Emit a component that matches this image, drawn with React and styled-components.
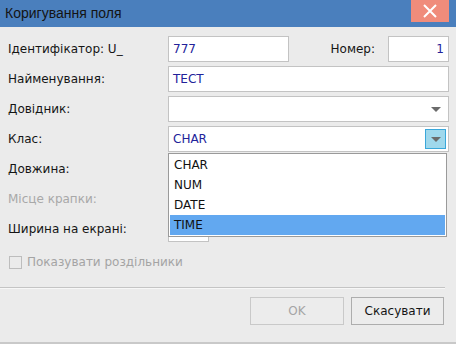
import React from "react";
import styled, { createGlobalStyle } from "styled-components";

const Global = createGlobalStyle`
  html, body {
    margin: 0;
    padding: 0;
    background: #ebebeb;
  }
  body {
    font-family: "DejaVu Sans", Verdana, sans-serif;
  }
`;

const Window = styled.div`
  width: 456px;
  height: 344px;
  box-sizing: border-box;
  display: flex;
  flex-direction: column;
  background: #ebebeb;
  border-bottom: 2px solid #c9c9c9;
  overflow: hidden;
`;

const TitleBar = styled.div`
  height: 27px;
  flex: none;
  display: flex;
  align-items: flex-start;
  justify-content: space-between;
  background: #4a7fbd;
`;

const Title = styled.span`
  font-family: "Liberation Sans", Arial, sans-serif;
  font-size: 14px;
  color: #141414;
  padding: 5px 0 0 5px;
`;

const CloseButton = styled.div`
  width: 38px;
  height: 22px;
  margin-right: 7px;
  background: #f08c7b;
  display: flex;
  align-items: center;
  justify-content: center;
`;

const Body = styled.div`
  flex: 1;
  display: flex;
  flex-direction: column;
  padding: 9px 7px 0 8px;
`;

const Form = styled.div`
  display: grid;
  grid-template-columns: 160px 1fr;
  grid-auto-rows: 26px;
  row-gap: 4px;
  align-items: center;
`;

const Label = styled.label`
  font-size: 12px;
  color: ${(p) => (p.$disabled ? "#a8a8a8" : "#151515")};
  white-space: nowrap;
`;

const Inline = styled.div`
  display: flex;
  align-items: center;
  height: 26px;
`;

const Input = styled.div`
  box-sizing: border-box;
  height: 26px;
  width: ${(p) => p.$w || "auto"};
  flex: ${(p) => (p.$w ? "none" : "1")};
  background: #fff;
  border: 1px solid #c3c3c3;
  padding: 0 4px;
  display: flex;
  align-items: center;
  justify-content: ${(p) => (p.$right ? "flex-end" : "flex-start")};
  font-size: 12px;
  color: #22229a;
`;

const InlineLabel = styled(Label)`
  margin-left: auto;
  margin-right: 13px;
`;

const ComboWrap = styled.div`
  position: relative;
  height: 26px;
`;

const Combo = styled(Input)`
  padding-right: 2px;
  justify-content: space-between;
`;

const ArrowBox = styled.div`
  width: 21px;
  height: 20px;
  box-sizing: border-box;
  display: flex;
  align-items: center;
  justify-content: center;
  background: ${(p) => (p.$active ? "#9fd8ec" : "transparent")};
  border: 1px solid ${(p) => (p.$active ? "#3aa7da" : "transparent")};
`;

const Arrow = styled.div`
  width: 0;
  height: 0;
  border-left: 5px solid transparent;
  border-right: 5px solid transparent;
  border-top: 5px solid #6b6b6b;
`;

const List = styled.ul`
  position: absolute;
  top: 27px;
  left: 0;
  right: 2px;
  margin: 0;
  padding: 1px;
  list-style: none;
  background: #fff;
  border: 1px solid #9a9a9a;
  z-index: 2;
`;

const Item = styled.li`
  height: 20px;
  line-height: 20px;
  padding-left: 4px;
  font-size: 12px;
  color: #111;
  background: ${(p) => (p.$selected ? "#62a8f0" : "transparent")};
`;

const CheckRow = styled.div`
  display: flex;
  align-items: center;
  gap: 5px;
  margin-top: 13px;
  margin-left: 1px;
  font-size: 12px;
  color: #a4a4a4;
`;

const Box = styled.span`
  width: 13px;
  height: 13px;
  box-sizing: border-box;
  border: 1px solid #bdbdbd;
  background: #ebebeb;
`;

const Separator = styled.div`
  height: 0;
  margin: 18px -7px 0 -8px;
  width: 445px;
  border-top: 1px solid #c4c4c4;
  border-bottom: 1px solid #f7f7f7;
`;

const Footer = styled.div`
  display: flex;
  justify-content: flex-end;
  gap: 7px;
  margin-top: 8px;
  padding-right: 5px;
`;

const Button = styled.button`
  box-sizing: border-box;
  height: 28px;
  width: ${(p) => p.$w};
  background: #ececec;
  border: 1px solid ${(p) => (p.disabled ? "#c9c9c9" : "#adadad")};
  font-family: inherit;
  font-size: 12px;
  color: ${(p) => (p.disabled ? "#a5a5a5" : "#151515")};
  padding: 0;
`;

const types = ["CHAR", "NUM", "DATE", "TIME"];

export default function App() {
  return (
    <>
      <Global />
      <Window>
        <TitleBar>
          <Title>Коригування поля</Title>
          <CloseButton>
            <svg width="14" height="14" viewBox="0 0 14 14">
              <path d="M1 1L13 13M13 1L1 13" stroke="#fff" strokeWidth="2" />
            </svg>
          </CloseButton>
        </TitleBar>
        <Body>
          <Form>
            <Label>Ідентифікатор: U_</Label>
            <Inline>
              <Input $w="121px">777</Input>
              <InlineLabel>Номер:</InlineLabel>
              <Input $w="61px" $right>1</Input>
            </Inline>

            <Label>Найменування:</Label>
            <Input>ТЕСТ</Input>

            <Label>Довідник:</Label>
            <Combo>
              <span />
              <ArrowBox>
                <Arrow />
              </ArrowBox>
            </Combo>

            <Label>Клас:</Label>
            <ComboWrap>
              <Combo>
                <span>CHAR</span>
                <ArrowBox $active>
                  <Arrow />
                </ArrowBox>
              </Combo>
              <List>
                {types.map((t) => (
                  <Item key={t} $selected={t === "TIME"}>
                    {t}
                  </Item>
                ))}
              </List>
            </ComboWrap>

            <Label>Довжина:</Label>
            <Inline>
              <Input $w="41px" />
            </Inline>

            <Label $disabled>Місце крапки:</Label>
            <Inline>
              <Input $w="41px" />
            </Inline>

            <Label>Ширина на екрані:</Label>
            <Inline>
              <Input $w="41px" />
            </Inline>
          </Form>

          <CheckRow>
            <Box />
            Показувати роздільники
          </CheckRow>

          <Separator />

          <Footer>
            <Button $w="94px" disabled>
              OK
            </Button>
            <Button $w="93px">Скасувати</Button>
          </Footer>
        </Body>
      </Window>
    </>
  );
}
